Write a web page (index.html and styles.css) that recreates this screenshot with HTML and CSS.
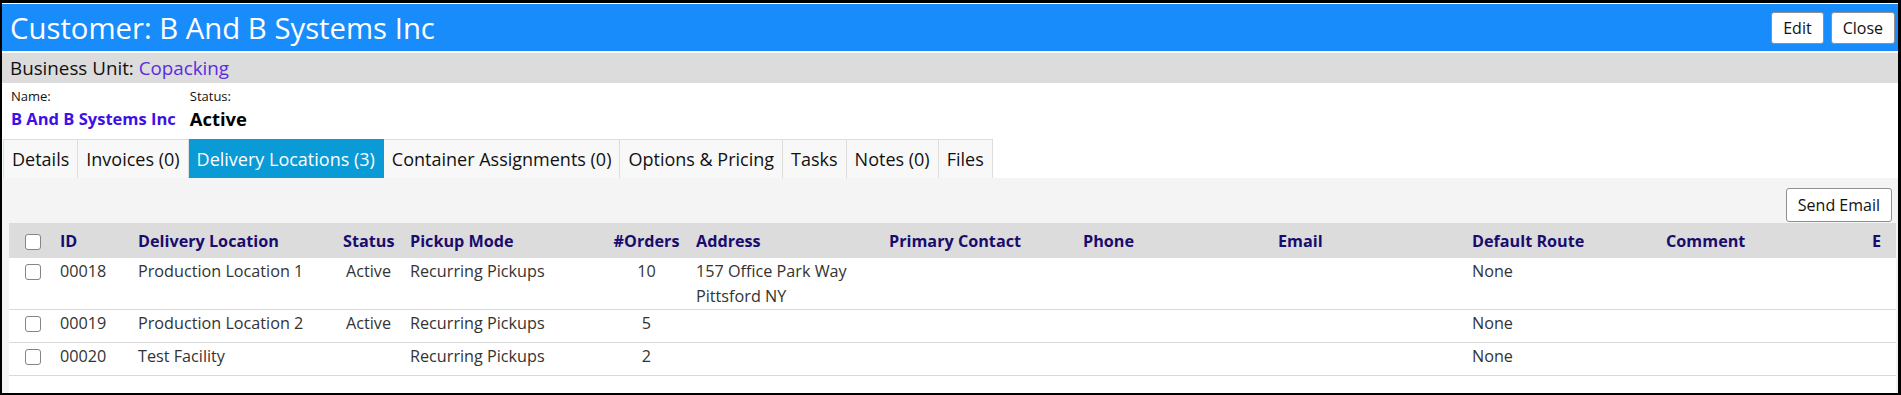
FILE: index.html
```html
<!DOCTYPE html>
<html>
<head>
  <title>Customer: B And B Systems Inc</title>
  <link rel="stylesheet" href="styles.css">
</head>
<body>

  <div class="page">
    <header class="title-bar">
      <h1>Customer: B And B Systems Inc</h1>
      <div class="title-actions">
        <button class="btn">Edit</button>
        <button class="btn">Close</button>
      </div>
    </header>

    <div class="unit-bar">Business Unit: <a href="#">Copacking</a></div>

    <section class="summary">
      <div class="field">
        <label>Name:</label>
        <a href="#" class="field-name">B And B Systems Inc</a>
      </div>
      <div class="field">
        <label>Status:</label>
        <span class="field-status">Active</span>
      </div>
    </section>

    <nav class="tabs">
      <a href="#" class="tab">Details</a>
      <a href="#" class="tab">Invoices (0)</a>
      <a href="#" class="tab active">Delivery Locations (3)</a>
      <a href="#" class="tab">Container Assignments (0)</a>
      <a href="#" class="tab">Options &amp; Pricing</a>
      <a href="#" class="tab">Tasks</a>
      <a href="#" class="tab">Notes (0)</a>
      <a href="#" class="tab">Files</a>
    </nav>

    <main class="tab-body">
      <div class="toolbar">
        <button class="btn">Send Email</button>
      </div>

      <div class="grid-wrap">
        <table class="grid">
          <colgroup>
            <col style="width:43px">
            <col style="width:78px">
            <col style="width:205px">
            <col style="width:67px">
            <col style="width:203px">
            <col style="width:83px">
            <col style="width:193px">
            <col style="width:194px">
            <col style="width:195px">
            <col style="width:194px">
            <col style="width:194px">
            <col style="width:206px">
            <col style="width:32px">
          </colgroup>
          <thead>
            <tr>
              <th class="cb"><input type="checkbox"></th>
              <th>ID</th>
              <th>Delivery Location</th>
              <th class="center">Status</th>
              <th>Pickup Mode</th>
              <th class="center">#Orders</th>
              <th>Address</th>
              <th>Primary Contact</th>
              <th>Phone</th>
              <th>Email</th>
              <th>Default Route</th>
              <th>Comment</th>
              <th>E</th>
            </tr>
          </thead>
          <tbody>
            <tr>
              <td class="cb"><input type="checkbox"></td>
              <td>00018</td>
              <td>Production Location 1</td>
              <td class="center">Active</td>
              <td>Recurring Pickups</td>
              <td class="center">10</td>
              <td>157 Office Park Way<br>Pittsford NY</td>
              <td></td>
              <td></td>
              <td></td>
              <td>None</td>
              <td></td>
              <td></td>
            </tr>
            <tr>
              <td class="cb"><input type="checkbox"></td>
              <td>00019</td>
              <td>Production Location 2</td>
              <td class="center">Active</td>
              <td>Recurring Pickups</td>
              <td class="center">5</td>
              <td></td>
              <td></td>
              <td></td>
              <td></td>
              <td>None</td>
              <td></td>
              <td></td>
            </tr>
            <tr>
              <td class="cb"><input type="checkbox"></td>
              <td>00020</td>
              <td>Test Facility</td>
              <td class="center"></td>
              <td>Recurring Pickups</td>
              <td class="center">2</td>
              <td></td>
              <td></td>
              <td></td>
              <td></td>
              <td>None</td>
              <td></td>
              <td></td>
            </tr>
          </tbody>
        </table>
      </div>
    </main>
  </div>

</body>
</html>
```

FILE: styles.css
```css
body {
  font-family: "Open Sans", sans-serif;
  margin: 0;
  padding: 0;
  background-color: white;
  overflow: hidden;
}

.page {
  height: 395px;
  box-sizing: border-box;
  border: 2px solid #000;
  border-top-width: 3px;
  border-right-width: 3px;
  padding-top: 1px;
  display: flex;
  flex-direction: column;
  overflow: hidden;
}

.btn {
  font-family: "Open Sans", sans-serif;
  font-size: 16px;
  color: #111;
  background-color: white;
  border: 1px solid #8f8f8f;
  border-radius: 3px;
  padding: 0 11px;
  height: 32px;
  cursor: pointer;
}

/* title */
.title-bar {
  background-color: #198cfc;
  height: 47px;
  display: flex;
  align-items: center;
  justify-content: space-between;
  padding: 0 3px 0 8px;
}

.title-bar h1 {
  margin: 0;
  color: white;
  font-weight: normal;
  font-size: 29.3px;
}

.title-actions {
  display: flex;
  gap: 7px;
}

.unit-bar {
  margin-top: 2px;
  height: 30px;
  line-height: 30px;
  background-color: #dcdcdc;
  padding-left: 8px;
  font-size: 18.8px;
  color: #111;
}

.unit-bar a {
  color: #5b2be0;
  text-decoration: none;
}

/* name / status */
.summary {
  height: 56px;
  box-sizing: border-box;
  display: flex;
  gap: 14px;
  padding: 3px 0 0 9px;
}

.field {
  display: flex;
  flex-direction: column;
}

.field label {
  font-size: 13px;
  color: #111;
  line-height: 20px;
}

.field-name {
  font-size: 16.5px;
  font-weight: bold;
  color: #3d10e6;
  text-decoration: none;
  line-height: 26px;
}

.field-status {
  font-size: 18.4px;
  font-weight: bold;
  color: #000;
  line-height: 26px;
}

/* tabs */
.tabs {
  display: flex;
  padding-left: 1px;
}

.tab {
  height: 38px;
  line-height: 38px;
  padding: 0 8px;
  font-size: 18px;
  color: #111;
  text-decoration: none;
  background-color: #f8f8f8;
  border-top: 1px solid #dddddd;
  border-right: 1px solid #dddddd;
}

.tab:first-child {
  border-left: 1px solid #dddddd;
}

.tab.active {
  background-color: #0a9ad6;
  border-color: #0a9ad6;
  color: white;
}

/* tab content */
.tab-body {
  flex: 1;
  background-color: #f4f4f4;
  padding: 10px 2px 0 7px;
  display: flex;
  flex-direction: column;
}

.toolbar {
  display: flex;
  justify-content: flex-end;
  padding-right: 4px;
  margin-bottom: 1px;
}

.toolbar .btn {
  height: 34px;
}

.grid-wrap {
  flex: 1;
  background-color: white;
}

.grid {
  border-collapse: collapse;
  table-layout: fixed;
  width: 1887px;
  font-size: 16.2px;
}

.grid th {
  background-color: #dcdcdc;
  color: #1a0c6e;
  font-weight: bold;
  text-align: left;
  height: 35px;
  padding: 0 8px;
  white-space: nowrap;
}

.grid td {
  color: #333;
  height: 31px;
  padding: 1px 8px 0;
  line-height: 25px;
  vertical-align: top;
  border-bottom: 1px solid #d9d9d9;
  white-space: nowrap;
}

.grid .center {
  text-align: center;
}

.grid .cb {
  padding-left: 16px;
  padding-right: 0;
}

.grid input[type="checkbox"] {
  appearance: none;
  width: 16px;
  height: 16px;
  margin: 0;
  border: 1px solid #858585;
  border-radius: 3px;
  background-color: white;
  vertical-align: middle;
}

.grid td input[type="checkbox"] {
  margin-top: -2px;
}
```
